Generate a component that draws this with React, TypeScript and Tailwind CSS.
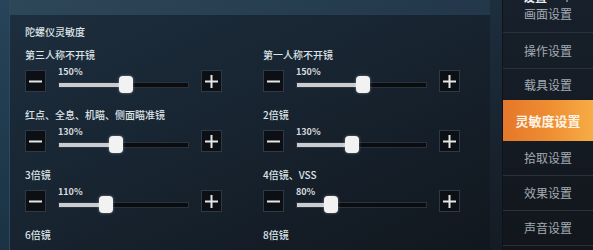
import React from 'react';

type Setting = { label: string; value: string; pos: number };

const rows: Setting[][] = [
  [
    { label: '第三人称不开镜', value: '150%', pos: 52 },
    { label: '第一人称不开镜', value: '150%', pos: 51 },
  ],
  [
    { label: '红点、全息、机瞄、侧面瞄准镜', value: '130%', pos: 44 },
    { label: '2倍镜', value: '130%', pos: 43 },
  ],
  [
    { label: '3倍镜', value: '110%', pos: 37 },
    { label: '4倍镜、VSS', value: '80%', pos: 27 },
  ],
  [
    { label: '6倍镜', value: '', pos: -1 },
    { label: '8倍镜', value: '', pos: -1 },
  ],
];

const sideItems = [
  { label: '操作设置', h: 'h-[36px]' },
  { label: '载具设置', h: 'h-[31px]' },
];

const sideItemsBottom = [
  { label: '拾取设置', h: 'h-[35px]' },
  { label: '效果设置', h: 'h-[35px]' },
  { label: '声音设置', h: 'h-[35px]' },
];

const StepButton = ({ plus }: { plus?: boolean }) => (
  <div className="w-[21px] h-[22px] shrink-0 bg-[#0c1015] border border-[#2e3945] flex items-center justify-center">
    <svg width="13" height="13" viewBox="0 0 13 13">
      <rect x="0" y="5.5" width="13" height="2" fill="#e4e6e8" />
      {plus && <rect x="5.5" y="0" width="2" height="13" fill="#e4e6e8" />}
    </svg>
  </div>
);

const SettingBlock = ({ s }: { s: Setting }) => (
  <div className="flex flex-col">
    <div className="h-[12px] text-[10px] leading-[12px] text-[#dde2e6] font-medium whitespace-nowrap">{s.label}</div>
    {s.pos >= 0 && (
      <div className="mt-[9px] flex items-center gap-[12px] h-[22px]">
        <StepButton />
        <div className="relative w-[131px] h-[22px]">
          <div className="absolute left-0 -top-[3px] text-[9px] leading-[10px] font-bold text-[#d6dadd]">{s.value}</div>
          <div className="absolute left-0 right-0 top-[12px] h-[6px] bg-[#090c10] border border-[#2a323c]">
            <div className="h-full bg-[#c9cdd1]" style={{ width: `${s.pos}%` }} />
          </div>
          <div
            className="absolute top-[6px] w-[14px] h-[17px] -ml-[7px] rounded-[4px] bg-[#f2f2f2] shadow-[0_0_3px_rgba(255,255,255,0.4)]"
            style={{ left: `${s.pos}%` }}
          />
        </div>
        <StepButton plus />
      </div>
    )}
  </div>
);

export default function App() {
  return (
    <div
      className="flex w-[593px] h-[250px] overflow-hidden bg-[#151b23]"
      style={{ fontFamily: '"Noto Sans CJK SC", "Noto Sans", sans-serif' }}
    >
      {/* left edge */}
      <div className="w-[10px] shrink-0 bg-gradient-to-b from-[#27445a] to-[#1a3244] border-r border-[#2f4a5e]" />

      {/* main panel */}
      <div className="w-[480px] shrink-0 flex flex-col">
        <div className="h-[15px] bg-gradient-to-r from-[#2d4658] to-[#22384a]" />
        <div className="flex-1 bg-gradient-to-br from-[#1d2e3e] via-[#17232f] to-[#11171e] pl-[15px] pt-[11px]">
          <div className="h-[12px] text-[10px] leading-[12px] text-[#dfe3e6] font-medium">陀螺仪灵敏度</div>
          <div className="mt-[11px] flex flex-col gap-[17px]">
            {rows.map((r, i) => (
              <div key={i} className="grid grid-cols-[238px_238px]">
                <SettingBlock s={r[0]} />
                <SettingBlock s={r[1]} />
              </div>
            ))}
          </div>
        </div>
      </div>

      {/* divider band */}
      <div className="w-[13px] shrink-0 bg-gradient-to-b from-[#1d2e3d] to-[#141b24] border-r border-[#0e1319]" />

      {/* sidebar */}
      <div className="flex-1 flex flex-col bg-gradient-to-b from-[#17202b] to-[#12161c] text-[12px] text-[#a3abb3]">
        <div className="h-[4px] overflow-hidden flex items-end gap-[14px] pl-[20px]">
          <span className="h-[14px] shrink-0 text-[12px] leading-[14px] font-bold text-[#e6e9ec]">设置</span>
          <span className="h-[14px] shrink-0 text-[12px] leading-[14px] text-[#c0c6cc]">个</span>
        </div>
        <div className="h-[29px] pb-[9px] flex items-center justify-center border-b border-[#2a313a]">画面设置</div>
        {sideItems.map((it, i) => (
          <div key={it.label} className={`${it.h} flex items-center justify-center ${i === 0 ? 'border-b border-[#2a313a]' : ''}`}>
            {it.label}
          </div>
        ))}
        <div className="h-[41px] flex items-center justify-center bg-gradient-to-r from-[#e5772a] via-[#ee8d32] to-[#f6ac45] text-[13px] font-bold text-[#fff3e6]">
          灵敏度设置
        </div>
        {sideItemsBottom.map((it) => (
          <div key={it.label} className={`${it.h} flex items-center justify-center border-b border-[#2a313a]`}>
            {it.label}
          </div>
        ))}
      </div>
    </div>
  );
}
